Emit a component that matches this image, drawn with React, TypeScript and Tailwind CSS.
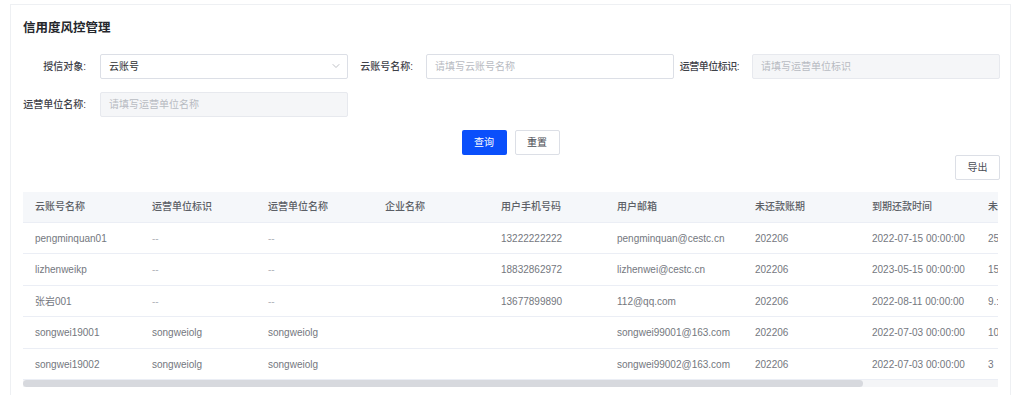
import { ChevronDown } from "lucide-react";

type Row = {
  name: string;
  unitId: string;
  unitName: string;
  company: string;
  phone: string;
  email: string;
  period: string;
  due: string;
  rest: string;
};

const rows: Row[] = [
  { name: "pengminquan01", unitId: "--", unitName: "--", company: "", phone: "13222222222", email: "pengminquan@cestc.cn", period: "202206", due: "2022-07-15 00:00:00", rest: "25" },
  { name: "lizhenweikp", unitId: "--", unitName: "--", company: "", phone: "18832862972", email: "lizhenwei@cestc.cn", period: "202206", due: "2023-05-15 00:00:00", rest: "15" },
  { name: "张岩001", unitId: "--", unitName: "--", company: "", phone: "13677899890", email: "112@qq.com", period: "202206", due: "2022-08-11 00:00:00", rest: "9.:" },
  { name: "songwei19001", unitId: "songweiolg", unitName: "songweiolg", company: "", phone: "", email: "songwei99001@163.com", period: "202206", due: "2022-07-03 00:00:00", rest: "10" },
  { name: "songwei19002", unitId: "songweiolg", unitName: "songweiolg", company: "", phone: "", email: "songwei99002@163.com", period: "202206", due: "2022-07-03 00:00:00", rest: "3" },
];

const headers = ["云账号名称", "运营单位标识", "运营单位名称", "企业名称", "用户手机号码", "用户邮箱", "未还款账期", "到期还款时间", "未"];
const widths = ["w-[117px]", "w-[116px]", "w-[117px]", "w-[116px]", "w-[116px]", "w-[138px]", "w-[117px]", "w-[116px]", "w-[60px]"];

const Label = ({ text, className = "" }: { text: string; className?: string }) => (
  <div className={`w-[78px] shrink-0 whitespace-nowrap text-right text-[10px] font-medium text-[#3f4249] ${className}`}>{text}</div>
);

const App = () => {
  return (
    <div className="h-[395px] w-[1025px] overflow-hidden bg-white pl-[10px] pt-[4px] font-['Liberation_Sans','Noto_Sans_CJK_SC',sans-serif]">
      <div className="h-[420px] w-[1001px] border border-[#eef0f3] bg-white">
        <div className="pl-[12px] pt-[14px] text-[12.5px] font-bold text-[#25272c]">信用度风控管理</div>

        {/* filters */}
        <div className="mt-[16px] flex items-center pl-[11px]">
          <Label text="授信对象:" className="pr-[14px]" />
          <div className="flex h-[25px] w-[248px] items-center justify-between rounded-[2px] border border-[#dcdfe6] pl-[8px] pr-[5px] text-[10px] text-[#303133]">
            <span>云账号</span>
            <ChevronDown size={12} strokeWidth={1.5} className="text-[#a8abb2]" />
          </div>
          <Label text="云账号名称:" className="pr-[13px]" />
          <div className="flex h-[25px] w-[248px] items-center rounded-[2px] border border-[#dcdfe6] px-[8px] text-[10px] text-[#b8bbc2]">
            请填写云账号名称
          </div>
          <Label text="运营单位标识:" className="pr-[13px] tracking-[-0.5px]" />
          <div className="flex h-[25px] w-[248px] items-center rounded-[2px] border border-[#e7e9ee] bg-[#f5f6f8] px-[8px] text-[10px] text-[#b8bbc2]">
            请填写运营单位标识
          </div>
        </div>

        <div className="mt-[13px] flex items-center pl-[11px]">
          <Label text="运营单位名称:" className="pr-[14px]" />
          <div className="flex h-[25px] w-[248px] items-center rounded-[2px] border border-[#e7e9ee] bg-[#f5f6f8] px-[8px] text-[10px] text-[#b8bbc2]">
            请填写运营单位名称
          </div>
        </div>

        <div className="mt-[13px] flex justify-center gap-[8px]">
          <button className="h-[25px] w-[45px] rounded-[2px] bg-[#0a4ffb] text-[10px] text-white">查询</button>
          <button className="h-[25px] w-[45px] rounded-[2px] border border-[#dcdfe6] bg-white text-[10px] text-[#4a4d55]">重置</button>
        </div>

        <div className="flex justify-end pr-[10px]">
          <button className="h-[25px] w-[45px] rounded-[2px] border border-[#dcdfe6] bg-white text-[10px] text-[#4a4d55]">导出</button>
        </div>

        {/* table */}
        <div className="ml-[12px] mt-[12px] w-[975px] overflow-hidden">
          <div className="flex h-[31px] items-center border-b border-[#ebeef5] bg-[#f5f7fa] text-[10px] font-medium text-[#5c5f66]">
            {headers.map((h, i) => (
              <div key={h} className={`${widths[i]} shrink-0 whitespace-nowrap pl-[12px]`}>{h}</div>
            ))}
          </div>
          {rows.map((r) => {
            const cells = [r.name, r.unitId, r.unitName, r.company, r.phone, r.email, r.period, r.due, r.rest];
            return (
              <div key={r.name} className="flex h-[31.5px] items-center border-b border-[#ebeef5] text-[10px] text-[#74777e]">
                {cells.map((c, i) => (
                  <div key={i} className={`${widths[i]} shrink-0 whitespace-nowrap pl-[12px] ${c === "--" ? "text-[#b0b3ba]" : ""}`}>{c}</div>
                ))}
              </div>
            );
          })}
          <div className="h-[7px] w-full bg-[#f4f5f7]">
            <div className="h-full w-[840px] rounded-full bg-[#d7d9de]" />
          </div>
        </div>
      </div>
    </div>
  );
};

export default App;
